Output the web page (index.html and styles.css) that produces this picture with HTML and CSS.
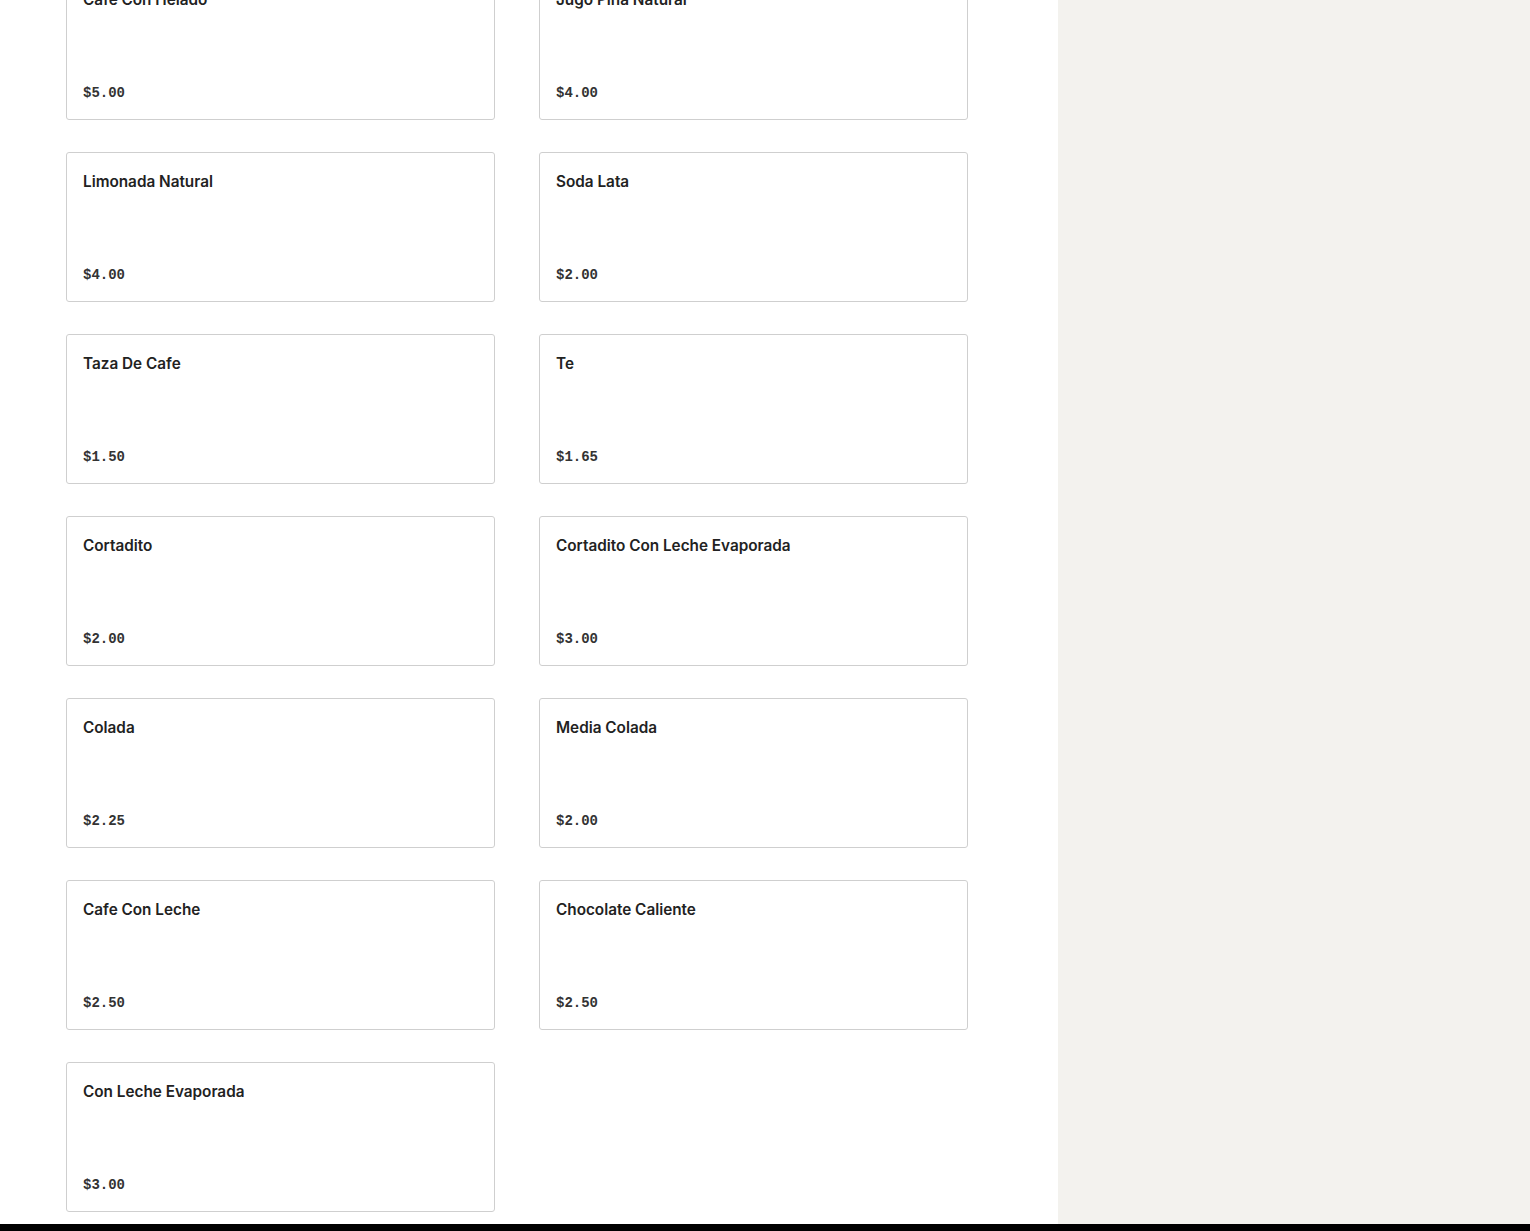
FILE: index.html
```html
<!DOCTYPE html>
<html lang="en">
<head>
    <meta charset="UTF-8">
    <meta name="viewport" content="width=device-width, initial-scale=1.0">
    <title>Menu - Bebidas</title>
    <link rel="stylesheet" href="styles.css">
</head>
<body>
    <div id="page">
        <main id="menu-column">
            <div id="item-grid">
                <div class="menu-item">
                    <div class="item-name">Cafe Con Helado</div>
                    <div class="item-price">$5.00</div>
                </div>
                <div class="menu-item">
                    <div class="item-name">Jugo Piña Natural</div>
                    <div class="item-price">$4.00</div>
                </div>
                <div class="menu-item">
                    <div class="item-name">Limonada Natural</div>
                    <div class="item-price">$4.00</div>
                </div>
                <div class="menu-item">
                    <div class="item-name">Soda Lata</div>
                    <div class="item-price">$2.00</div>
                </div>
                <div class="menu-item">
                    <div class="item-name">Taza De Cafe</div>
                    <div class="item-price">$1.50</div>
                </div>
                <div class="menu-item">
                    <div class="item-name">Te</div>
                    <div class="item-price">$1.65</div>
                </div>
                <div class="menu-item">
                    <div class="item-name">Cortadito</div>
                    <div class="item-price">$2.00</div>
                </div>
                <div class="menu-item">
                    <div class="item-name">Cortadito Con Leche Evaporada</div>
                    <div class="item-price">$3.00</div>
                </div>
                <div class="menu-item">
                    <div class="item-name">Colada</div>
                    <div class="item-price">$2.25</div>
                </div>
                <div class="menu-item">
                    <div class="item-name">Media Colada</div>
                    <div class="item-price">$2.00</div>
                </div>
                <div class="menu-item">
                    <div class="item-name">Cafe Con Leche</div>
                    <div class="item-price">$2.50</div>
                </div>
                <div class="menu-item">
                    <div class="item-name">Chocolate Caliente</div>
                    <div class="item-price">$2.50</div>
                </div>
                <div class="menu-item">
                    <div class="item-name">Con Leche Evaporada</div>
                    <div class="item-price">$3.00</div>
                </div>
            </div>
        </main>
        <aside id="order-panel"></aside>
    </div>
    <div id="bottom-bar"></div>
</body>
</html>
```

FILE: styles.css
```css
body {
    margin: 0;
    font-family: Inter, "Liberation Sans", Arial, sans-serif;
    color: #222;
    background-color: #fff;
    overflow: hidden;
}

#page {
    display: flex;
    height: 1224px;
    overflow: hidden;
}

#menu-column {
    width: 1058px;
    padding-left: 66px;
    box-sizing: border-box;
    background-color: #fff;
}

#order-panel {
    flex: 1;
    background-color: #f3f2ee;
}

#item-grid {
    display: grid;
    grid-template-columns: 429px 429px;
    column-gap: 44px;
    row-gap: 32px;
    margin-top: -30px;
}

.menu-item {
    height: 150px;
    box-sizing: border-box;
    border: 1px solid #cfcfcf;
    border-radius: 3px;
    padding: 16px;
    display: flex;
    flex-direction: column;
    justify-content: space-between;
}

.item-name {
    font-size: 15.3px;
    font-weight: 600;
    line-height: 26px;
    color: #222;
}

.item-price {
    font-family: "Liberation Mono", "DejaVu Sans Mono", monospace;
    font-size: 14px;
    font-weight: bold;
    line-height: 20px;
    color: #333;
}

#bottom-bar {
    height: 7px;
    background-color: #000;
}
```
